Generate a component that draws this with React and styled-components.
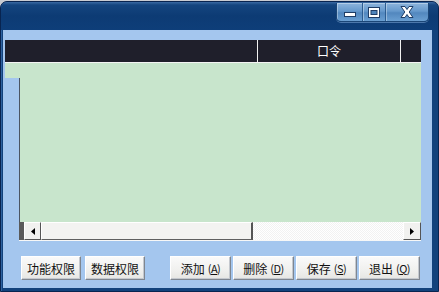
import React from "react";
import styled, { createGlobalStyle } from "styled-components";

const Global = createGlobalStyle`
  html, body { margin: 0; padding: 0; background: #c9ccd2; }
  body { width: 439px; height: 292px; overflow: hidden; font-family: "Noto Sans CJK SC", "Liberation Sans", sans-serif; }
`;

const Window = styled.div`
  box-sizing: border-box;
  width: 439px;
  height: 291px;
  margin-top: 1px;
  display: flex;
  flex-direction: column;
  background: #12427c;
  border: 1px solid #082450;
  border-radius: 7px 7px 0 0;
  box-shadow: inset 1px 0 0 #2e62a0;
`;

const TitleBar = styled.div`
  height: 28px;
  flex: none;
  display: flex;
  justify-content: flex-end;
  align-items: flex-start;
  padding-right: 9px;
  border-radius: 6px 6px 0 0;
  background: linear-gradient(180deg, #3a6aa3 0px, #14457f 3px, #0d3b74 14px, #0e3e79 28px);
`;

const CaptionGroup = styled.div`
  display: flex;
  margin-top: 1px;
  border: 1px solid #1b4677;
  border-top: none;
  border-radius: 0 0 5px 5px;
  overflow: hidden;
  box-shadow: 0 1px 0 rgba(140, 180, 225, 0.5);
`;

const CaptionButton = styled.div`
  width: ${(p) => p.$w}px;
  height: 18px;
  display: flex;
  align-items: center;
  justify-content: center;
  background: linear-gradient(180deg, #8db4dc 0%, #6699cc 45%, #5287be 55%, #6a9fd2 100%);
  border-left: ${(p) => (p.$first ? "none" : "1px solid #2c5c90")};
  box-shadow: inset 1px 1px 0 rgba(255, 255, 255, 0.35);
`;

const Client = styled.div`
  flex: 1;
  display: flex;
  flex-direction: column;
  margin: 0 6px 3px 2px;
  background: #a4c6ee;
  padding: 10px 11px 0 2px;
`;

const Grid = styled.div`
  display: flex;
  flex-direction: column;
`;

const Header = styled.div`
  display: flex;
  height: 22px;
  background: #1f1f2b;
  border-bottom: 1px solid #f4f4f4;
`;

const HeaderCell = styled.div`
  box-sizing: border-box;
  width: ${(p) => (p.$w ? `${p.$w}px` : "auto")};
  flex: ${(p) => (p.$w ? "none" : "1")};
  border-right: ${(p) => (p.$divider ? "1px solid #f2f2f2" : "none")};
  color: #ffffff;
  font-size: 12px;
  line-height: 22px;
  text-align: center;
`;

const FirstRow = styled.div`
  height: 15px;
  background: #c8e5cc;
`;

const BodyRow = styled.div`
  display: flex;
  height: ${(p) => p.$h}px;
`;

const RowGutter = styled.div`
  width: 14px;
  flex: none;
  background: #a4c6ee;
`;

const DataArea = styled.div`
  flex: 1;
  background: #c8e5cc;
  border-left: 1px solid #4b5563;
`;

const ScrollBar = styled.div`
  flex: 1;
  display: flex;
  height: 18px;
  background: #f3f3f3;
  border-bottom: 1px solid #f7f7f7;
`;

const ScrollEdge = styled.div`
  width: 5px;
  flex: none;
  background: #5a5a5a;
`;

const ScrollArrow = styled.div`
  width: ${(p) => p.$w}px;
  flex: none;
  box-sizing: border-box;
  display: flex;
  align-items: center;
  justify-content: center;
  background: #f1f1ef;
  border-top: 1px solid #ffffff;
  border-left: 1px solid #ffffff;
  border-right: 1px solid #555555;
  border-bottom: 1px solid #555555;
`;

const Thumb = styled.div`
  width: 212px;
  flex: none;
  box-sizing: border-box;
  background: #f3f3f1;
  border-top: 1px solid #ffffff;
  border-left: 1px solid #ffffff;
  border-right: 2px solid #555555;
  border-bottom: 1px solid #606060;
`;

const Track = styled.div`
  flex: 1;
  background-color: #fbfbfb;
  background-image: repeating-conic-gradient(#f2f2f2 0 25%, #ffffff 0 50%);
  background-size: 2px 2px;
`;

const ButtonBar = styled.div`
  display: flex;
  align-items: center;
  padding: 15px 0 0 16px;
`;

const Group = styled.div`
  display: flex;
  gap: ${(p) => p.$gap}px;
  margin-left: ${(p) => p.$ml || 0}px;
`;

const Button = styled.div`
  box-sizing: border-box;
  width: ${(p) => p.$w}px;
  height: 24px;
  display: flex;
  align-items: center;
  justify-content: center;
  background: linear-gradient(180deg, #fafafa 0%, #f0f0ee 60%, #e6e6e3 100%);
  border-top: 1px solid #ffffff;
  border-left: 1px solid #ffffff;
  border-right: 1px solid #7f8690;
  border-bottom: 1px solid #7f8690;
  box-shadow: inset -1px -1px 0 #c4c8ce;
  font-size: 12px;
  color: #111111;
  white-space: nowrap;
`;

const Key = styled.span`
  margin-left: 3px;
  font-size: 11px;
  letter-spacing: -0.5px;
  u { text-decoration: underline; }
`;

const MinIcon = () => (
  <svg width="12" height="10" viewBox="0 0 12 10">
    <rect x="0.5" y="5.5" width="11" height="4" fill="#ffffff" stroke="#1f3d66" strokeWidth="1" />
  </svg>
);

const MaxIcon = () => (
  <svg width="12" height="11" viewBox="0 0 12 11">
    <rect x="0.5" y="0.5" width="11" height="10" fill="#ffffff" stroke="#1f3d66" strokeWidth="1" />
    <rect x="3" y="3.5" width="6" height="4" fill="#4e84bb" stroke="#1f3d66" strokeWidth="1" />
  </svg>
);

const CloseIcon = () => (
  <svg width="14" height="12" viewBox="0 0 14 12">
    <path
      d="M1 0.5 H5 L7 3.5 L9 0.5 H13 L9.2 6 L13 11.5 H9 L7 8.5 L5 11.5 H1 L4.8 6 Z"
      fill="#ffffff"
      stroke="#1f3d66"
      strokeWidth="1"
      strokeLinejoin="round"
    />
  </svg>
);

const LeftArrow = () => (
  <svg width="4" height="7" viewBox="0 0 4 7">
    <path d="M4 0 L0 3.5 L4 7 Z" fill="#000" />
  </svg>
);

const RightArrow = () => (
  <svg width="4" height="7" viewBox="0 0 4 7">
    <path d="M0 0 L4 3.5 L0 7 Z" fill="#000" />
  </svg>
);

const actions = [
  { label: "添加", key: "A" },
  { label: "删除", key: "D" },
  { label: "保存", key: "S" },
  { label: "退出", key: "Q" },
];

export default function App() {
  return (
    <>
      <Global />
      <Window>
        <TitleBar>
          <CaptionGroup>
            <CaptionButton $w={25} $first>
              <MinIcon />
            </CaptionButton>
            <CaptionButton $w={22}>
              <MaxIcon />
            </CaptionButton>
            <CaptionButton $w={42}>
              <CloseIcon />
            </CaptionButton>
          </CaptionGroup>
        </TitleBar>
        <Client>
          <Grid>
            <Header>
              <HeaderCell $w={253} $divider />
              <HeaderCell $w={143} $divider>口令</HeaderCell>
              <HeaderCell />
            </Header>
            <FirstRow />
            <BodyRow $h={144}>
              <RowGutter />
              <DataArea />
            </BodyRow>
            <BodyRow $h={19}>
              <RowGutter />
              <ScrollBar>
                <ScrollEdge />
                <ScrollArrow $w={17}>
                  <LeftArrow />
                </ScrollArrow>
                <Thumb />
                <Track />
                <ScrollArrow $w={18}>
                  <RightArrow />
                </ScrollArrow>
              </ScrollBar>
            </BodyRow>
          </Grid>
          <ButtonBar>
            <Group $gap={4}>
              <Button $w={60}>功能权限</Button>
              <Button $w={60}>数据权限</Button>
            </Group>
            <Group $gap={2} $ml={25}>
              {actions.map((a) => (
                <Button key={a.key} $w={61}>
                  {a.label}
                  <Key>
                    (<u>{a.key}</u>)
                  </Key>
                </Button>
              ))}
            </Group>
          </ButtonBar>
        </Client>
      </Window>
    </>
  );
}
